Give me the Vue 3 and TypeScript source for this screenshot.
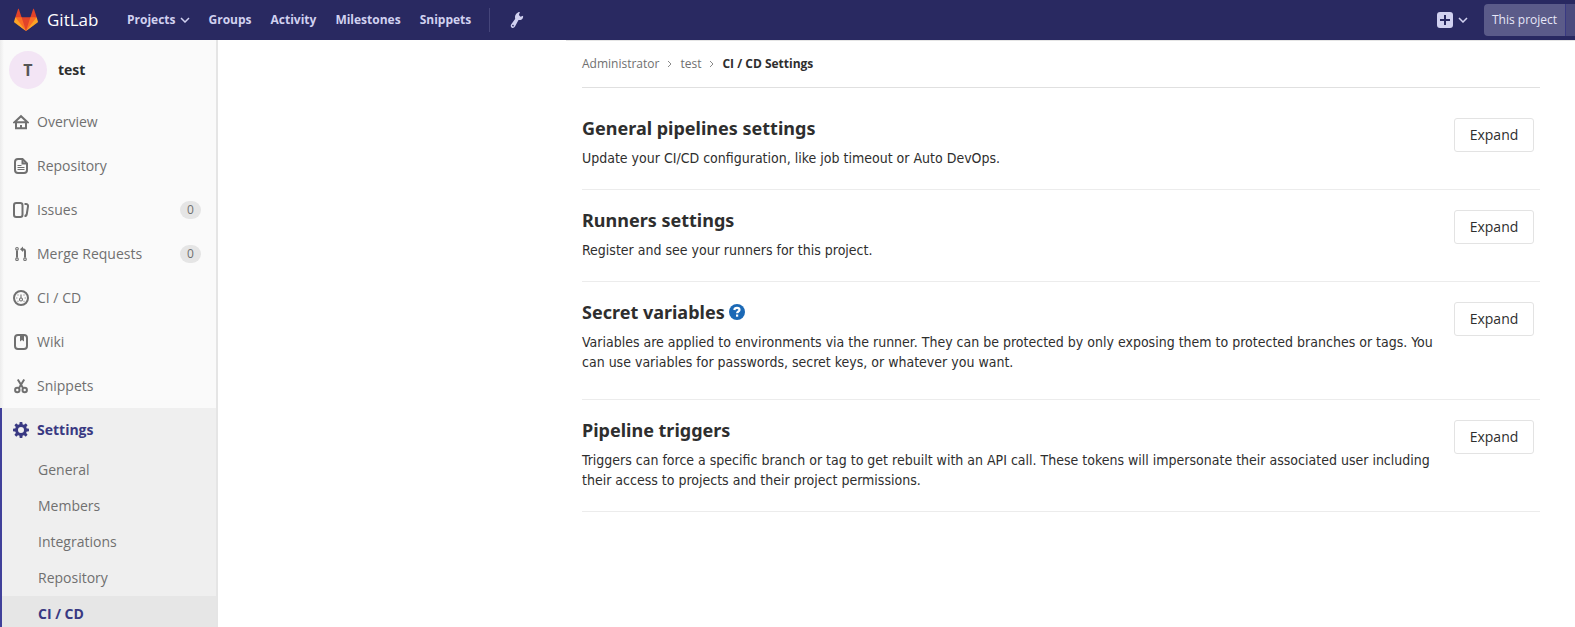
<script setup lang="ts">
interface NavItem {
  icon: string
  label: string
  count?: number
}

interface Section {
  title: string
  text: string
  help?: boolean
}

const topLinks: string[] = ['Groups', 'Activity', 'Milestones', 'Snippets']

const navItems: NavItem[] = [
  { icon: 'home', label: 'Overview' },
  { icon: 'doc', label: 'Repository' },
  { icon: 'issues', label: 'Issues', count: 0 },
  { icon: 'merge', label: 'Merge Requests', count: 0 },
  { icon: 'pipeline', label: 'CI / CD' },
  { icon: 'book', label: 'Wiki' },
  { icon: 'scissors', label: 'Snippets' },
]

const subItems: string[] = ['General', 'Members', 'Integrations', 'Repository', 'CI / CD']
const activeSub = 'CI / CD'

const sections: Section[] = [
  {
    title: 'General pipelines settings',
    text: 'Update your CI/CD configuration, like job timeout or Auto DevOps.',
  },
  {
    title: 'Runners settings',
    text: 'Register and see your runners for this project.',
  },
  {
    title: 'Secret variables',
    text: 'Variables are applied to environments via the runner. They can be protected by only exposing them to protected branches or tags. You can use variables for passwords, secret keys, or whatever you want.',
    help: true,
  },
  {
    title: 'Pipeline triggers',
    text: 'Triggers can force a specific branch or tag to get rebuilt with an API call. These tokens will impersonate their associated user including their access to projects and their project permissions.',
  },
]
</script>

<template>
  <div class="shell">
    <header class="topbar">
      <a class="brand" href="#">
        <svg width="24" height="24" viewBox="0 0 36 36" aria-hidden="true">
          <path fill="#e24329" d="M2 14l9.38 9v-9l-4-12.28c-.205-.632-1.176-.632-1.38 0z" />
          <path fill="#e24329" d="M34 14l-9.38 9v-9l4-12.28c.205-.632 1.176-.632 1.38 0z" />
          <path fill="#e24329" d="M18 34.38L3 14h30z" />
          <path fill="#fc6d26" d="M18 34.38L11.38 14H2l4 11z" />
          <path fill="#fc6d26" d="M18 34.38L24.62 14H34l-4 11z" />
          <path fill="#fca326" d="M2 14L.1 20.16c-.18.565 0 1.2.5 1.56L18 34.38z" />
          <path fill="#fca326" d="M34 14l1.9 6.16c.18.565 0 1.2-.5 1.56L18 34.38z" />
        </svg>
        <span>GitLab</span>
      </a>
      <nav class="toplinks">
        <button type="button" class="toplink">
          Projects
          <svg class="chev" width="10" height="6" viewBox="0 0 10 6" aria-hidden="true"><path d="M1 1l4 4 4-4" /></svg>
        </button>
        <a v-for="link in topLinks" :key="link" class="toplink" href="#">{{ link }}</a>
      </nav>
      <a class="wrench" href="#" aria-label="Admin area">
        <svg width="14" height="18" viewBox="0 0 14 18" aria-hidden="true">
          <path fill="#d1d1f0" fill-rule="evenodd" d="M9.900 1L8.900 4l1.600 1.700 2.600-1c.3 2-.7 3.800-2.600 4.200-.8.2-1.500.1-2 .2L5 15.600c-.7 1.300-2.100 1.700-3.200 1.100-1.100-.7-1.400-2-.7-3.200l4-5.500c.2-.7-.2-1.200-.1-2.300C5.300 3.300 7.500.8 9.900 1zM2.200 14.300a.8.8 0 1 0 1.500.6.8.8 0 0 0-1.500-.6z" />
        </svg>
      </a>
      <button type="button" class="create" aria-label="New">
        <svg width="16" height="16" viewBox="0 0 16 16" aria-hidden="true">
          <rect width="16" height="16" rx="3" fill="#d1d1f0" />
          <path d="M8 3v10M3 8h10" stroke="#292961" stroke-width="2" />
        </svg>
        <svg class="chev" width="10" height="6" viewBox="0 0 10 6" aria-hidden="true"><path d="M1 1l4 4 4-4" /></svg>
      </button>
      <div class="search">
        <button type="button" class="scope">This project</button>
        <span class="searchfield"></span>
      </div>
    </header>

    <div class="body">
      <aside class="sidebar">
        <a class="project" href="#">
          <span class="avatar">T</span>
          <span>test</span>
        </a>
        <ul class="nav">
          <li v-for="item in navItems" :key="item.icon">
            <a class="navlink" href="#">
              <svg class="icon" width="16" height="16" viewBox="0 0 16 16" aria-hidden="true">
                <g v-if="item.icon === 'home'">
                  <path d="M1.500 8.300L8 2.200l6.500 6.100zM3 8.500v5.800h10V8.500" />
                  <path class="solid" d="M7 11h2v3.500H7z" />
                </g>
                <g v-else-if="item.icon === 'doc'">
                  <path d="M9.500 1H5a3 3 0 0 0-3 3v8a3 3 0 0 0 3 3h6a3 3 0 0 0 3-3V5.500z" />
                  <path d="M9.500 1.500v4h4" />
                  <path class="thin" d="M4.500 7.500h4M4.500 9.500h7M4.500 11.500h7" />
                </g>
                <g v-else-if="item.icon === 'issues'">
                  <rect x="1" y="1" width="8.500" height="14" rx="2.200" />
                  <path d="M11.500 2h1.500c1.300 0 2.200 1 2 2.300l-1.200 7.700c-.2 1.200-1 2-2.300 2" />
                </g>
                <g v-else-if="item.icon === 'merge'">
                  <g class="thin">
                    <circle cx="4" cy="2.800" r="1.300" />
                    <circle cx="4" cy="13.200" r="1.300" />
                    <circle cx="12" cy="13.200" r="1.300" />
                  </g>
                  <path d="M4 4.500v7M12 11.500v-6c0-1.500-.8-2.300-2.500-2.300" />
                  <path class="solid" d="M10 .5v5.400L7 3.200z" />
                </g>
                <g v-else-if="item.icon === 'pipeline'">
                  <circle cx="8" cy="8" r="7" />
                  <circle class="thin" cx="8" cy="9.500" r="1.500" />
                  <path class="thin" d="M8 4.500V8" />
                  <path class="solid" d="M3.300 7.500h1v1h-1zM11.700 7.500h1v1h-1zM4.500 4.500h1v1h-1zM10.500 4.500h1v1h-1zM4.500 10.800h1v1h-1zM10.500 10.800h1v1h-1z" />
                </g>
                <g v-else-if="item.icon === 'book'">
                  <rect x="2" y="1" width="12" height="14" rx="3" />
                  <path class="solid" d="M7 1h4v6.500L9 6 7 7.500z" />
                </g>
                <g v-else>
                  <circle cx="4.300" cy="12" r="2.200" />
                  <circle cx="11.700" cy="12" r="2.200" />
                  <path d="M4.800 1.500l5.400 8.800M11.200 1.500L5.800 10.300" />
                </g>
              </svg>
              <span>{{ item.label }}</span>
              <span v-if="item.count !== undefined" class="badge">{{ item.count }}</span>
            </a>
          </li>
          <li class="current">
            <a class="navlink" href="#">
              <svg width="16" height="16" viewBox="0 0 16 16" aria-hidden="true">
                <g fill="#393982">
                  <path fill-rule="evenodd" d="M8 2a6 6 0 1 1 0 12A6 6 0 0 1 8 2zm0 3a3 3 0 1 0 0 6 3 3 0 0 0 0-6z" />
                  <rect v-for="n in 8" :key="n" x="6.500" y="0" width="3" height="3.200" rx=".8" :transform="`rotate(${n * 45} 8 8)`" />
                </g>
              </svg>
              <span>Settings</span>
            </a>
            <ul class="subnav">
              <li v-for="sub in subItems" :key="sub">
                <a class="sublink" :class="{ selected: sub === activeSub }" href="#">{{ sub }}</a>
              </li>
            </ul>
          </li>
        </ul>
      </aside>

      <main class="content">
        <nav class="crumbs" aria-label="Breadcrumb">
          <a href="#">Administrator</a>
          <svg width="5" height="8" viewBox="0 0 5 8" aria-hidden="true"><path d="M1 1l3 3-3 3" /></svg>
          <a href="#">test</a>
          <svg width="5" height="8" viewBox="0 0 5 8" aria-hidden="true"><path d="M1 1l3 3-3 3" /></svg>
          <a href="#" class="here">CI / CD Settings</a>
        </nav>
        <section v-for="section in sections" :key="section.title" class="section">
          <div class="info">
            <h4>
              {{ section.title }}
              <a v-if="section.help" href="#" aria-label="Help">
                <svg width="16" height="16" viewBox="0 0 16 16" aria-hidden="true">
                  <circle cx="8" cy="8" r="8" fill="#1b69b6" />
                  <path d="M5.300 6C5.500 4.500 6.600 3.900 8 3.900c1.500 0 2.500.8 2.500 2C10.500 7.600 8.100 7.400 8.100 9.300" fill="none" stroke="#fff" stroke-width="2.200" />
                  <path d="M7 10.500h2.200v2.200H7z" fill="#fff" />
                </svg>
              </a>
            </h4>
            <p :class="{ roomy: section.help }">{{ section.text }}</p>
          </div>
          <button type="button" class="expand">Expand</button>
        </section>
      </main>
    </div>
  </div>
</template>

<style>
body {
  margin: 0;
  background: #fff;
}
</style>

<style scoped>
.shell {
  display: flex;
  flex-direction: column;
  height: 100vh;
  overflow: hidden;
  font-family: "Open Sans", "Noto Sans", sans-serif;
  font-size: 14px;
  line-height: 20px;
  color: #2e2e2e;
}

a {
  color: inherit;
  text-decoration: none;
}

button {
  font: inherit;
  cursor: pointer;
}

ul {
  list-style: none;
  margin: 0;
  padding: 0;
}

.topbar {
  display: flex;
  align-items: center;
  flex: none;
  height: 40px;
  padding-left: 14px;
  overflow: hidden;
  background: #292961;
  color: #d1d1f0;
}

.brand {
  display: flex;
  align-items: center;
  gap: 9px;
  width: 113px;
  font-size: 17px;
  color: #fff;
}

.toplinks {
  display: flex;
  gap: 20px;
}

.toplink {
  display: flex;
  align-items: center;
  gap: 4px;
  padding: 0;
  border: 0;
  background: none;
  color: #d1d1f0;
  font-size: 12px;
  font-weight: 700;
}

.toplink + .toplink {
  margin-left: -1px;
}

.chev {
  fill: none;
  stroke: #d1d1f0;
  stroke-width: 1.5;
}

.wrench {
  display: flex;
  align-items: center;
  height: 24px;
  margin-left: 18px;
  padding-left: 20px;
  border-left: 1px solid #45457a;
}

.create {
  display: flex;
  align-items: center;
  gap: 5px;
  margin-left: auto;
  padding: 0;
  border: 0;
  background: none;
}

.search {
  display: flex;
  height: 32px;
  margin-left: 16px;
}

.scope {
  width: 82px;
  padding: 0;
  border: 0;
  border-right: 1px solid #393982;
  border-radius: 4px 0 0 4px;
  background: #5b5b89;
  color: #e7e7f8;
  font-size: 12px;
}

.searchfield {
  width: 9px;
  background: #4b4b7e;
}

.body {
  display: flex;
  flex: 1;
  min-height: 0;
}

.sidebar {
  flex: none;
  width: 218px;
  overflow: hidden;
  box-sizing: border-box;
  background: linear-gradient(90deg, #ececec, #fafafa 4px);
  border-right: 2px solid #e5e5e5;
  color: #707070;
}

.project {
  display: flex;
  align-items: center;
  gap: 11px;
  height: 60px;
  padding-left: 9px;
  font-weight: 700;
  color: #2e2e2e;
}

.avatar {
  width: 38px;
  border-radius: 50%;
  background: #f3e5f5;
  color: #555;
  font-size: 16px;
  line-height: 38px;
  text-align: center;
}

.navlink {
  display: flex;
  align-items: center;
  gap: 8px;
  height: 44px;
  padding: 0 15px 0 13px;
}

.icon {
  fill: none;
  stroke: #707070;
  stroke-width: 2;
}

.icon .thin {
  stroke-width: 1.1;
}

.icon .solid {
  fill: #707070;
  stroke: none;
}

.badge {
  width: 21px;
  margin-left: auto;
  border-radius: 9px;
  background: #e5e5e5;
  font-size: 12px;
  line-height: 18px;
  text-align: center;
}

.current {
  border-left: 2px solid #40409a;
  background: #efefef;
}

.current > .navlink {
  padding-left: 11px;
  font-weight: 700;
  color: #393982;
}

.sublink {
  display: block;
  padding: 8px 0 8px 36px;
}

.sublink.selected {
  background: #e6e6e6;
  font-weight: 700;
  color: #393982;
}

.content {
  flex: 1;
  max-width: 958px;
  margin-left: auto;
  padding: 0 35px 0 16px;
  border-top: 1px solid #e5e5e5;
}

.crumbs {
  display: flex;
  align-items: center;
  gap: 8px;
  height: 46px;
  margin-bottom: 10px;
  border-bottom: 1px solid #e0e0e0;
  color: #707070;
  font-size: 12px;
}

.crumbs svg {
  fill: none;
  stroke: #8a8a8a;
}

.crumbs .here {
  font-weight: 700;
  color: #2e2e2e;
}

.section {
  display: flex;
  align-items: flex-start;
  justify-content: space-between;
  padding: 20px 6px 21px 0;
  border-bottom: 1px solid #ececec;
}

.info {
  max-width: 856px;
}

h4 {
  display: flex;
  align-items: center;
  gap: 4px;
  margin: 0 0 10px;
  font-family: "Noto Sans", "Open Sans", sans-serif;
  font-size: 18px;
  font-weight: 700;
  line-height: 20px;
}

h4 a {
  display: flex;
}

p {
  margin: 0;
  font-family: "DejaVu Sans Condensed", "Open Sans", sans-serif;
}

.roomy {
  padding-bottom: 6px;
}

.expand {
  flex: none;
  width: 80px;
  height: 34px;
  padding: 0;
  border: 1px solid #e3e3e3;
  border-radius: 3px;
  background: #fff;
  color: #2e2e2e;
}
</style>
